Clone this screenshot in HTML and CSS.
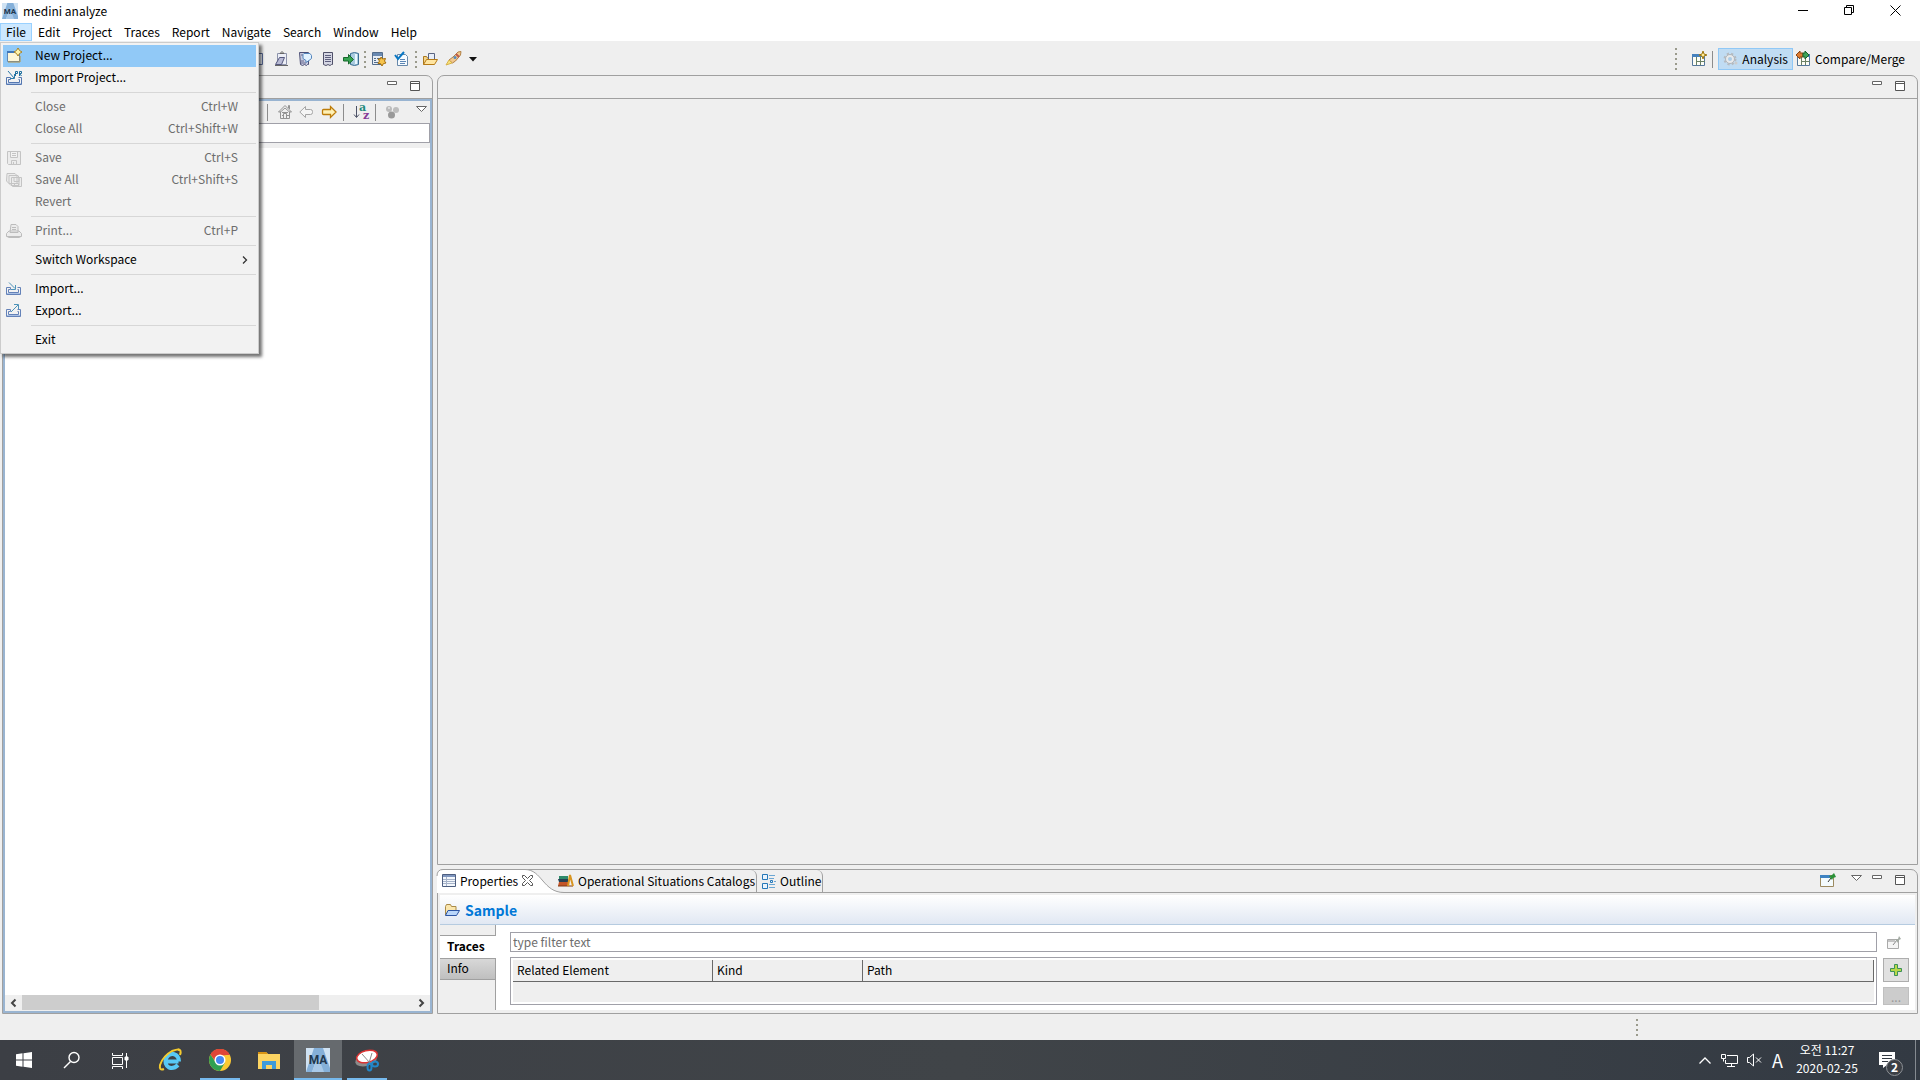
FILE: index.html
```html
<!DOCTYPE html>
<html lang="en">
<head>
    <meta charset="UTF-8">
    <meta name="viewport" content="width=device-width, initial-scale=1.0">
    <title>medini analyze</title>
    <link rel="stylesheet" href="styles.css">
</head>
<body>

<header class="titlebar">
    <svg class="app-icon" width="16" height="16" viewBox="0 0 24 24"><use href="#ma-logo"/></svg>
    <span class="app-title">medini analyze</span>
    <div class="window-buttons">
        <button aria-label="Minimize"><svg width="11" height="11"><path d="M0 5.5h10" stroke="#000"/></svg></button>
        <button aria-label="Restore"><svg width="11" height="11" fill="none" stroke="#000"><path d="M.5 2.500h7v7h-7zM2.500 2.500v-2h7v7h-2"/></svg></button>
        <button aria-label="Close"><svg width="11" height="11"><path d="M.5.5l10 10M10.500.5l-10 10" stroke="#000"/></svg></button>
    </div>
</header>

<nav class="menubar">
    <div class="menu-root">
        <button class="menu-title open">File</button>
        <div class="menu">
            <button class="item selected">
                <svg width="16" height="16"><path d="M1.500 3.500h12v10h-12z" fill="#fdf6d8" stroke="#5f86b5"/><path d="M1 3h9v2H1z" fill="#3f76b8"/><path d="M14 8v6H2" stroke="#b89443" fill="none"/><path d="M12 0l1.500 2.500L16 4l-2.500 1.500L12 8l-1.500-2.500L8 4l2.500-1.500z" fill="#fff3a8" stroke="#a98226"/></svg>
                <span>New Project...</span>
            </button>
            <button class="item">
                <svg width="16" height="16" fill="none"><path d="M4.500 7.500h-4v7h15v-7h-3M4.500 7.500v2h-2v3h11v-3h-1" stroke="#5577b0"/><path d="M1 13h14v1H1z" fill="#a9c0e4"/><path d="M2 1l6 7M8.500 4v4.500H4" stroke="#2a78a8"/><path d="M9.500 6V1.500h2v2h-2M13.500 6V1.500h2v2h-2l2 2.500" stroke="#1f6f9f"/></svg>
                <span>Import Project...</span>
            </button>
            <hr>
            <button class="item" disabled><span>Close</span><kbd>Ctrl+W</kbd></button>
            <button class="item" disabled><span>Close All</span><kbd>Ctrl+Shift+W</kbd></button>
            <hr>
            <button class="item" disabled>
                <svg width="16" height="16" fill="#ececec" stroke="#c4c4c4"><path d="M1.500 1.500h13v13h-12l-1-1zM4.500 1.500v6h7v-6M5.500 14.500v-4h5v4M7.500 12v2M6 3.500h4M6 5.500h4"/></svg>
                <span>Save</span><kbd>Ctrl+S</kbd>
            </button>
            <button class="item" disabled>
                <svg width="16" height="16" fill="#ececec" stroke="#c4c4c4"><path d="M1 1.500h8l2 2v8H3L.5 9zM3 3.500h9l1 2v8H5l-2-2zM5.500 5.500h10v9h-9l-1-1zM8 5.500v4h5v-4M8.500 14.500v-3h4v3"/></svg>
                <span>Save All</span><kbd>Ctrl+Shift+S</kbd>
            </button>
            <button class="item" disabled><span>Revert</span></button>
            <hr>
            <button class="item" disabled>
                <svg width="16" height="16" fill="#ececec" stroke="#bcbcbc"><path d="M3 8L.5 10.500v3h15v-3L13 8zM1 13.500l2 1h10l2-1M4 9.500l1-8h5l2 2v6zM6 4.500h4M6 6.500h4M4 9.500h8"/></svg>
                <span>Print...</span><kbd>Ctrl+P</kbd>
            </button>
            <hr>
            <button class="item submenu">
                <span>Switch Workspace</span>
                <svg class="more" width="6" height="10"><path d="M1 1.500L4.500 5 1 8.500" fill="none" stroke="#333" stroke-width="1.300"/></svg>
            </button>
            <hr>
            <button class="item">
                <svg width="16" height="16" fill="none"><path d="M4.500 6.500h-4v7h14v-7h-3M4.500 6.500v2h-2v3h10v-3h-1" stroke="#6482b8"/><path d="M1 12h13v1H1z" fill="#a9c0e4"/><path d="M3 1.500l6 6M9.500 4v4.500H5" stroke="#4d93b9"/></svg>
                <span>Import...</span>
            </button>
            <button class="item">
                <svg width="16" height="16" fill="none"><path d="M4.500 6.500h-4v7h14v-7h-3M4.500 6.500v2h-2v3h10v-3h-1" stroke="#6482b8"/><path d="M1 12h13v1H1z" fill="#a9c0e4"/><path d="M5 9l7-7M8 1.500h4.500V6" stroke="#4d93b9"/></svg>
                <span>Export...</span>
            </button>
            <hr>
            <button class="item"><span>Exit</span></button>
        </div>
    </div>
    <button class="menu-title">Edit</button>
    <button class="menu-title">Project</button>
    <button class="menu-title">Traces</button>
    <button class="menu-title">Report</button>
    <button class="menu-title">Navigate</button>
    <button class="menu-title">Search</button>
    <button class="menu-title">Window</button>
    <button class="menu-title">Help</button>
</nav>

<div class="toolbar">
    <div class="tools">
        <button class="tool" aria-label="Paste"><svg width="16" height="16"><path d="M2.500 2.500h9v11h-9z" fill="#e9eef8" stroke="#5b6c99"/></svg></button>
        <button class="tool" aria-label="Edit clipboard"><svg width="16" height="16"><path d="M3.500 2.500h9v11h-9z" fill="#eceef6" stroke="#8d93ab"/><path d="M6 2.500L8 .5l2 2z" fill="#ddd" stroke="#666"/><path d="M5.500 6.500h5l-3 7h-6z" fill="#b8bad4" stroke="#55587e"/><path d="M1 14.500h13" stroke="#666"/></svg></button>
        <button class="tool" aria-label="Review"><svg width="16" height="16"><path d="M2.500 1.500h9v12h-1l-1 1-2-1-2 1-2-1z" fill="#c8cbe0" stroke="#4c4f76"/><path d="M4 4h5M4 10h3M4 12h5" stroke="#66698e"/><path d="M7 2.500h6l1.500 2v3L12 9.500l-3 2v-2L6 7.500v-4z" fill="#e2f2ff" stroke="#5586bd"/></svg></button>
        <button class="tool" aria-label="Report"><svg width="16" height="16"><path d="M3.500 1.500h9v12h-1l-1.500 1-2-1-2 1-2.500-1z" fill="#d5d6e3" stroke="#4f5069"/><path d="M5 4.500h6M5 6.500h6M5 8.500h6M5 10.500h6" stroke="#5d5e7d"/></svg></button>
        <button class="tool" aria-label="Import data"><svg width="16" height="16"><path d="M7.500 2.500q4-2 8 0v11q-4 2-8 0z" fill="#a9cbe0" stroke="#3a6e93"/><path d="M13 3v10" stroke="#e9f7ff" stroke-width="2"/><path d="M.5 6.500h5v-3l5 5-5 4.500v-3h-5z" fill="#37a451" stroke="#17682c"/></svg></button>
        <i class="handle"></i>
        <button class="tool" aria-label="Form settings"><svg width="16" height="16"><path d="M1.500 1.500h10v12h-10z" fill="#e6edf5" stroke="#536c8b"/><path d="M2 2h9v3H2z" fill="#6989b1"/><path d="M3 7.500h2M6 7.500h3M3 9.500h2M3 11.500h4" stroke="#536c8b"/><path d="M10 6l1.500 2 3-.5L13.500 10l1.500 2-2.500.5L11 15l-1.500-2.500H7L8.500 10 7 8h2.500z" fill="#f6c44d" stroke="#a66e0b"/></svg></button>
        <button class="tool" aria-label="Validate"><svg width="16" height="16"><path d="M3.500 3.500h8l2 2v9h-10z" fill="#f6fbff" stroke="#6788aa"/><path d="M6 8.500h5M6 10.500h6M6 12.500h5" stroke="#5c86b5"/><path d="M1 4l3 4 6-7" fill="none" stroke="#0877c4" stroke-width="2"/></svg></button>
        <i class="handle"></i>
        <button class="tool" aria-label="Open"><svg width="16" height="16"><use href="#folder"/></svg></button>
        <button class="tool" aria-label="Launch"><svg width="17" height="16"><path d="M8 6l5-5 3-.5L15.500 4l-5 6-3 2L4 9z" fill="#f2c88d" stroke="#b28146"/><path d="M1 14l3-5 3 3z" fill="#f9e37c" stroke="#d7b24a"/><path d="M11 3l3 3" stroke="#bd5a4c" stroke-width="2"/><circle cx="10" cy="6.500" r="1.500" fill="#538abf"/></svg></button>
        <button class="tool drop" aria-label="Launch menu"><svg width="8" height="5"><path d="M0 0h8L4 4.500z" fill="#111"/></svg></button>
    </div>
    <div class="perspectives">
        <i class="handle tall"></i>
        <button class="tool" aria-label="Open Perspective"><svg width="16" height="16"><use href="#perspective"/><path d="M12 0l1 3 3 1-3 1-1 3-1-3-3-1 3-1z" fill="#ffeb91" stroke="#a27a15"/></svg></button>
        <i class="divider"></i>
        <button class="perspective active">
            <svg width="16" height="16"><circle cx="7" cy="8" r="5" fill="#d8dce0" stroke="#b5bbc1" stroke-width="3" stroke-dasharray="2 2"/><circle cx="7" cy="8" r="4.500" fill="#e8eaec" stroke="#aeb5bc"/><circle cx="7" cy="8" r="2" fill="#aacde8"/><circle cx="13" cy="12" r="1.500" fill="#ccc"/></svg>
            Analysis
        </button>
        <button class="perspective">
            <svg width="16" height="16"><use href="#perspective"/><path d="M0 4l4-4v2h3v4H4v2z" fill="#dc7a31" stroke="#8b4512"/><path d="M13 4L9 0v2H7v4h2v2z" fill="#3da357" stroke="#18622c"/></svg>
            Compare/Merge
        </button>
    </div>
</div>

<main class="workbench">
    <section class="view explorer">
        <div class="view-head">
            <div class="view-buttons">
                <button aria-label="Minimize view"><svg width="10" height="12"><use href="#minimize"/></svg></button>
                <button aria-label="Maximize view"><svg width="10" height="12"><use href="#maximize"/></svg></button>
            </div>
        </div>
        <div class="explorer-body">
            <div class="explorer-tools">
                <i class="divider"></i>
                <button class="tool" aria-label="Home"><svg width="16" height="16" fill="#eee" stroke="#939393"><path d="M3.500 7.500v7h9v-7M1.500 8L8 1.500 14.500 8h-2L8 4 3.500 8zM11.500 4V1.500h1V5M6.500 14.500v-5h3v5M5 8.500h6M5 11.500h1M10 11.500h2"/></svg></button>
                <button class="tool" aria-label="Back"><svg width="16" height="16"><path d="M.8 8L6.500 2.500v3h5q2 0 2 2v1q0 2-2 2h-5v3z" fill="#f5f5f5" stroke="#a5a5a5"/></svg></button>
                <button class="tool" aria-label="Forward"><svg width="16" height="16"><path d="M15 8L9.500 2.500v3h-7q-1 0-1 1v3q0 1 1 1h7v3z" fill="#fff1b5" stroke="#bd7c0a" stroke-width="1.300"/></svg></button>
                <i class="divider"></i>
                <button class="tool" aria-label="Sort"><svg width="18" height="18"><path d="M3.500 3v11M1 11.500l2.500 3 2.500-3" fill="none" stroke="#4d5266"/><text class="sort-a" x="6" y="8">a</text><text class="sort-z" x="10" y="16">z</text></svg></button>
                <i class="divider"></i>
                <button class="tool" aria-label="Filter"><svg width="16" height="16"><circle cx="4" cy="5" r="3" fill="#bbb"/><circle cx="11" cy="6" r="3" fill="#bdbdbd"/><circle cx="6.500" cy="11" r="3.500" fill="#999"/><circle cx="4" cy="4" r="1" fill="#e4e4e4"/></svg></button>
                <button class="view-menu" aria-label="View menu"><svg width="11" height="6"><use href="#triangle"/></svg></button>
            </div>
            <input class="path-field" type="text" aria-label="Path">
            <div class="tree"></div>
            <div class="scrollbar">
                <button aria-label="Scroll left"><svg width="7" height="8"><path d="M5.500.5L2 4l3.500 3.500" fill="none" stroke="#444" stroke-width="2"/></svg></button>
                <div class="track"><div class="thumb"></div></div>
                <button aria-label="Scroll right"><svg width="7" height="8"><path d="M1.500.5L5 4 1.500 7.500" fill="none" stroke="#444" stroke-width="2"/></svg></button>
            </div>
        </div>
    </section>

    <div class="right">
        <section class="view editor">
            <div class="view-head">
                <div class="view-buttons">
                    <button aria-label="Minimize editor"><svg width="10" height="12"><use href="#minimize"/></svg></button>
                    <button aria-label="Maximize editor"><svg width="10" height="12"><use href="#maximize"/></svg></button>
                </div>
            </div>
        </section>

        <section class="view properties">
            <div class="view-head">
                <div class="tabs">
                    <button class="tab current">
                        <svg class="tab-shape" width="128" height="24"><path d="M0 24V5Q1 .5 6 .5H88C105 .5 106 23.500 127 23.500V24z" fill="#fff"/><path d="M0 7Q0 .5 6 .5H88C105 .5 106 23.500 127 23.500" fill="none" stroke="#a0a0a0"/></svg>
                        <svg width="14" height="14"><path d="M.5.5h13v12H.5z" fill="#f3f7fc" stroke="#4d5e80"/><path d="M1 1h12v2H1z" fill="#7e95bd"/><path d="M4.500 3v9M1 5.500h12M1 7.500h12M1 9.500h12" stroke="#a6b3c9"/></svg>
                        <span>Properties</span>
                        <svg class="tab-close" width="11" height="11"><path d="M.5.5h2l3 3 3-3h2v2l-3 3 3 3v2h-2l-3-3-3 3h-2v-2l3-3-3-3z" fill="#fff" stroke="#555"/></svg>
                    </button>
                    <button class="tab catalogs">
                        <svg width="16" height="14"><path d="M1 2h9v3H1z" fill="#2d8a6a"/><path d="M0 5h10v3H1z" fill="#263f52"/><path d="M1 8h9v4H0z" fill="#c25427"/><path d="M0 12h15" stroke="#803813"/><path d="M10 12l2-11 3 11" fill="none" stroke="#d89520" stroke-width="2"/></svg>
                        <span>Operational Situations Catalogs</span>
                    </button>
                    <button class="tab">
                        <svg width="14" height="16" fill="#eaf4fd" stroke="#2678b8"><path d="M.5 1.500h5v5h-5zM.5 10.500h5v5h-5zM8.500 7.500h2v2h-2z"/><path d="M7 2.500h6M7 5.500h5M12 8.500h2M7 11.500h6M7 14.500h6" stroke="#6ba6d3"/></svg>
                        <span>Outline</span>
                    </button>
                </div>
                <div class="view-buttons">
                    <button class="pin" aria-label="Pin"><svg width="16" height="15"><path d="M.5 2.500h13v11H.5z" fill="#f4fbfd" stroke="#9c8a61"/><path d="M0 2h10v3H0z" fill="#3f83c2"/><path d="M8 9l3-4" stroke="#333"/><path d="M9 3l3 4 1-2 3-1-2-4-2 2z" fill="#2b9138"/></svg></button>
                    <button class="view-menu" aria-label="View menu"><svg width="11" height="6"><use href="#triangle"/></svg></button>
                    <button aria-label="Minimize view"><svg width="10" height="12"><use href="#minimize"/></svg></button>
                    <button aria-label="Maximize view"><svg width="10" height="12"><use href="#maximize"/></svg></button>
                </div>
            </div>
            <div class="properties-body">
                <h2 class="section-title">
                    <svg width="16" height="14"><path d="M1.500 12V3.500l1-2h4l1 2h4.500V7" fill="#fae6ae" stroke="#a98a48"/><path d="M1.500 12.500L4 7.500h11.500l-3 5z" fill="#b9d6fa" stroke="#2d55a3"/></svg>
                    Sample
                </h2>
                <div class="section-content">
                    <div class="side-tabs">
                        <button class="side-tab current">Traces</button>
                        <button class="side-tab">Info</button>
                    </div>
                    <div class="traces">
                        <input class="filter" type="text" placeholder="type filter text" aria-label="Filter">
                        <div class="table-frame">
                            <table>
                                <thead>
                                    <tr>
                                        <th class="col-element">Related Element</th>
                                        <th class="col-kind">Kind</th>
                                        <th>Path</th>
                                    </tr>
                                </thead>
                            </table>
                        </div>
                    </div>
                    <div class="actions">
                        <button class="link" aria-label="Link"><svg width="16" height="14"><path d="M.5 3.500h11v9H.5z" fill="#f5f5f5" stroke="#aaa"/><path d="M1 4h7v2H1z" fill="#c4c4c4"/><path d="M6 9l4-5" stroke="#888"/><path d="M8 3l3 4 1-3 2-1-2-3-1 3z" fill="#a3aaa3"/></svg></button>
                        <button class="action" aria-label="Add"><svg width="12" height="12"><path d="M4.500.5h3v4h4v3h-4v4h-3v-4h-4v-3h4z" fill="#b8d84a" stroke="#3c9159"/></svg></button>
                        <button class="action more-button" aria-label="More" disabled>...</button>
                    </div>
                </div>
            </div>
        </section>
    </div>
</main>

<div class="statusbar"><i class="handle"></i></div>

<footer class="taskbar">
    <div class="system">
        <button class="task" aria-label="Start"><svg width="16" height="16" fill="#fff"><path d="M0 2.300L6.500 1.300V7.500H0zM7.500 1.200L16 0v7.500H7.500zM0 8.500h6.500v6.200L0 13.700zM7.500 8.500H16V16l-8.500-1.200z"/></svg></button>
        <button class="task" aria-label="Search"><svg width="18" height="18" fill="none" stroke="#fff" stroke-width="1.400"><circle cx="11" cy="6.500" r="5"/><path d="M7.500 10.500L1 17"/></svg></button>
        <button class="task" aria-label="Task View"><svg width="17" height="17" fill="none" stroke="#fff"><path d="M.5 1v2.500h10V1M.5 5.500h10v7H.5zM.5 17v-2.500h10V17M14.500 1v15"/><path d="M13 5h3v3h-3z" fill="#fff"/></svg></button>
    </div>
    <button class="task" aria-label="Internet Explorer"><svg width="24" height="24" fill="none"><path d="M19.500 13.500H7.500M19 17Q15 21 10 19.500 5 16.500 7 10.500 9.500 5.500 14.500 6 20 7.500 20 13.500" stroke="#58c9f5" stroke-width="4"/><path d="M19.500 2.500Q22 0 13 3 4 8 1 17q-1 6 4 4M19 2q4-1 2 5" stroke="#f5cb2e" stroke-width="2"/></svg></button>
    <button class="task running" aria-label="Chrome"><svg width="22" height="22"><circle cx="11" cy="11" r="11" fill="#fcc934"/><path d="M1.500 5.500A11 11 0 0 1 20.500 5.500L11 7z" fill="#df4638"/><path d="M1.500 5.500A11 11 0 0 0 11 22l5-8.500L6.500 13z" fill="#30a052"/><path d="M11 6h9.700a11 11 0 0 0-19.200-.5l5 7z" fill="#df4638"/><circle cx="11" cy="11" r="5.500" fill="#fff"/><circle cx="11" cy="11" r="4" fill="#4788f4"/></svg></button>
    <button class="task" aria-label="File Explorer"><svg width="22" height="19"><path d="M0 1h8l2 2h12v15H0z" fill="#fcd462"/><path d="M0 1h8l2 2H0z" fill="#d99413"/><path d="M4 18v-8h14v8h-4v-4H8v4z" fill="#3e9bda"/></svg></button>
    <button class="task running focused" aria-label="medini analyze"><svg width="24" height="24" viewBox="0 0 24 24"><use href="#ma-logo"/></svg></button>
    <button class="task running" aria-label="Snipping Tool"><svg width="26" height="24"><ellipse cx="12" cy="12" rx="11" ry="6" fill="#8b8b8b" transform="rotate(-14 12 12)"/><ellipse cx="13" cy="8.500" rx="10.500" ry="6" fill="#fff" stroke="#dc3434" stroke-width="1.500" transform="rotate(-14 13 8.500)"/><path d="M8 6l8 9M18 5l-3 10" stroke="#888"/><g fill="none" stroke="#2286c8" stroke-width="2"><ellipse cx="15.500" cy="19" rx="2" ry="3.500"/><ellipse cx="21" cy="16" rx="3" ry="2.500"/></g></svg></button>
    <div class="tray">
        <svg width="14" height="9"><path d="M1.500 7.500L7 2l5.500 5.500" fill="none" stroke="#fff" stroke-width="1.300"/></svg>
        <svg width="17" height="15" fill="none" stroke="#fff"><path d="M6 2.500h10.500v8H4.500V7M.5 1.500h4v4h-4zM2.500 5.500v3M10.500 10.500v3M6 13.500h8"/></svg>
        <svg width="16" height="14" fill="none" stroke="#fff"><path d="M.5 4.500h2l4-3.500v12l-4-3.500h-2zM9 4.500l5 5M14 4.500l-5 5"/></svg>
        <span class="ime">A</span>
        <time class="clock" datetime="2020-02-25T11:27"><span>오전 11:27</span><span>2020-02-25</span></time>
        <button class="notifications" aria-label="Notifications">
            <svg width="16" height="16"><path d="M0 0h16v13h-8l-4 3v-3H0z" fill="#fff"/><path d="M3 3.500h10M3 6.500h10M3 9.500h6" stroke="#333a43"/></svg>
            <span class="badge">2</span>
        </button>
    </div>
</footer>

<!-- shared icons -->
<svg class="defs" width="0" height="0">
    <symbol id="ma-logo" viewBox="0 0 24 24"><path d="M0 0h24v24H0z" fill="#cfe2f3"/><path d="M8 0h9l7 20v4h-7L12 8 6 24H0z" fill="#85b0d9"/><path d="M12 8l6 16H6z" fill="#a9c9e8"/><text class="logo-text" x="12" y="16">MA</text></symbol>
    <symbol id="folder" viewBox="0 0 16 16"><path d="M1.500 13.500v-8h3l1 1.500h7v6" fill="#f5d48a" stroke="#a9781d"/><path d="M6.500 2.500h6v6h-6z" fill="#e8eef8" stroke="#5a6582"/><path d="M1.500 13.500l3-5h11l-3 5z" fill="#ffe5a1" stroke="#b57a17"/></symbol>
    <symbol id="perspective" viewBox="0 0 16 16"><path d="M1.500 3.500h12v11h-12z" fill="#fdfdf6" stroke="#55779b"/><path d="M1 3h13v3H1z" fill="#4681bd"/><path d="M5.500 6v8M9.500 6v8M5 10.500h9" stroke="#6b8165"/></symbol>
    <symbol id="minimize" viewBox="0 0 10 12"><path d="M.5 2.500h9v3h-9z" fill="#fff" stroke="#666"/></symbol>
    <symbol id="maximize" viewBox="0 0 10 12"><path d="M.5 2.500h9v9h-9zM.5 4.500h9" fill="#fff" stroke="#555"/></symbol>
    <symbol id="triangle" viewBox="0 0 11 6"><path d="M.5.5h10l-5 5z" fill="#fff" stroke="#666"/></symbol>
</svg>

</body>
</html>
```

FILE: styles.css
```css
* {
    box-sizing: border-box;
}
body {
    margin: 0;
    height: 100vh;
    display: flex;
    flex-direction: column;
    background-color: #efefef;
    color: #000;
    font-family: "Noto Sans CJK KR", "Open Sans", sans-serif;
    font-size: 12px;
    line-height: 18px;
    overflow: hidden;
}
button, input {
    font: inherit;
    color: inherit;
    margin: 0;
    padding: 0;
    border: 0;
    border-radius: 0;
    background: none;
}
button {
    white-space: nowrap;
}
svg {
    display: block;
    flex: none;
    overflow: visible;
}
.defs {
    position: absolute;
}
.logo-text {
    font: bold 12px "Roboto", sans-serif;
    fill: #22384f;
    text-anchor: middle;
}

/* title bar */
.titlebar {
    display: flex;
    align-items: center;
    height: 23px;
    padding: 0 2px 2px;
    background-color: #fff;
}
.app-title {
    margin-left: 5px;
}
.window-buttons {
    display: flex;
    margin-left: auto;
    height: 20px;
}
.window-buttons button {
    display: grid;
    place-items: center;
    width: 46px;
}

/* menu bar */
.menubar {
    display: flex;
    height: 18px;
    background-color: #fff;
}
.menu-root {
    position: relative;
    z-index: 10;
}
.menu-title {
    height: 18px;
    padding: 0 6px;
    line-height: 18px;
}
.menu-title.open {
    background-color: #cce8ff;
    box-shadow: inset 0 0 0 1px #99d1ff;
}
.menu {
    position: absolute;
    top: 19px;
    left: 0;
    width: 259px;
    padding: 2px;
    border: 1px solid #ccc;
    background-color: #f2f2f2;
    box-shadow: 3px 3px 3px rgba(0, 0, 0, 0.55);
}
.item {
    display: grid;
    grid-template-columns: 32px 1fr auto;
    align-items: center;
    width: 100%;
    height: 22px;
    padding: 0 18px 2px 0;
    text-align: left;
}
.item svg {
    margin: 2px 0 0 3px;
}
.item span {
    grid-column: 2;
}
.item kbd {
    font: inherit;
}
.item:disabled {
    color: #6d6d6d;
}
.item.selected {
    background-color: #91c9f7;
}
.item.submenu {
    padding-right: 8px;
}
.menu hr {
    height: 1px;
    margin: 3px 0 3px 28px;
    border: 0;
    background-color: #d7d7d7;
}

/* main toolbar */
.toolbar {
    display: flex;
    justify-content: space-between;
    align-items: center;
    height: 34px;
    padding: 2px 15px 0 251px;
}
.tools, .perspectives {
    display: flex;
    align-items: center;
}
.tool {
    display: grid;
    place-items: center start;
    width: 23px;
    height: 22px;
}
.handle {
    width: 2px;
    height: 17px;
    margin: 0 5px 0 -2px;
    background: repeating-linear-gradient(#9a9a8c 0 2px, transparent 2px 5px);
}
.tool.drop {
    place-items: center;
    width: 9px;
}
.handle.tall {
    height: 22px;
    margin-right: 14px;
}
.divider {
    width: 1px;
    height: 17px;
    background-color: #8c8c8c;
}
.perspectives .tool {
    width: 21px;
}
.perspective {
    display: flex;
    align-items: center;
    height: 22px;
    gap: 3px;
}
.perspective.active {
    margin: 0 3px 0 5px;
    padding: 0 4px;
    border: 1px solid #90c8f6;
    background-color: #c0dcf3;
}

/* views */
.workbench {
    flex: 1;
    display: grid;
    grid-template-columns: 431px 1fr;
    gap: 4px;
    min-height: 0;
    padding: 0 2px;
}
.right {
    display: flex;
    flex-direction: column;
    gap: 4px;
    min-width: 0;
}
.view {
    display: flex;
    flex-direction: column;
    border: 1px solid #a0a0a0;
    border-radius: 7px 7px 0 0;
}
.view-head {
    display: flex;
    height: 23px;
    border-bottom: 1px solid #a0a0a0;
}
.view-buttons {
    display: flex;
    gap: 13px;
    margin: 3px 12px 0 auto;
    height: 12px;
}
.view-buttons button {
    display: flex;
    align-items: flex-start;
    height: 12px;
}
.view-buttons .view-menu {
    margin: 2px -3px 0 0;
}
.view-buttons .pin {
    margin-right: 2px;
}
.editor {
    flex: 1;
}

/* explorer */
.explorer-body {
    flex: 1;
    display: flex;
    flex-direction: column;
    border: 2px solid #99b4d1;
    background-color: #efefef;
}
.explorer-tools {
    display: flex;
    align-items: center;
    height: 22px;
    padding: 0 3px 0 262px;
}
.explorer-tools .divider {
    margin-right: 9px;
}
.explorer-tools .tool {
    width: 22px;
}
.explorer-tools .view-menu {
    align-self: start;
    margin: 5px 0 0 auto;
}
.sort-a {
    font: bold 11px "DejaVu Serif", serif;
    fill: #1e8a7c;
}
.sort-z {
    font: bold 11px "DejaVu Serif", serif;
    fill: #863b98;
}
.path-field {
    height: 20px;
    border: 1px solid #a0a0a8;
    background-color: #fff;
}
.tree {
    flex: 1;
    margin-top: 5px;
    background-color: #fff;
}
.scrollbar {
    display: flex;
    height: 16px;
}
.scrollbar button {
    display: grid;
    place-items: center;
    width: 17px;
}
.track {
    flex: 1;
}
.thumb {
    width: 76%;
    height: 15px;
    background-color: #cdcdcd;
}

/* properties */
.properties {
    height: 145px;
}
.tabs {
    display: flex;
    margin-bottom: -1px;
}
.tab {
    display: flex;
    align-items: center;
    gap: 4px;
    padding: 0 1px 2px 5px;
    border-right: 1px solid #a0a0a0;
    border-radius: 0 6px 0 0;
}
.tab.current {
    position: relative;
    width: 115px;
    padding-left: 4px;
    border: 0;
}
.tab > * {
    position: relative;
}
.tab > .tab-shape {
    position: absolute;
    top: -1px;
    left: -1px;
}
.properties-body {
    flex: 1;
    display: flex;
    flex-direction: column;
    margin: 2px 2px 3px;
    background-color: #fff;
}
.section-title {
    display: flex;
    align-items: center;
    gap: 5px;
    height: 30px;
    margin: 0;
    padding-left: 4px;
    border-bottom: 1px solid #b5cbe0;
    background: linear-gradient(#fff, #e1e8f3);
    color: #0078d7;
    font-size: 14px;
    font-weight: bold;
}
.section-content {
    flex: 1;
    display: flex;
}
.side-tabs {
    display: flex;
    flex-direction: column;
    width: 56px;
    padding-top: 10px;
    background: linear-gradient(#a0a0a0, #a0a0a0) right / 1px 100% no-repeat #efefef;
}
.side-tab {
    height: 22px;
    padding: 0 0 3px 7px;
    border: 1px solid #a0a0a0;
    border-left: 0;
    background: linear-gradient(#d8d8d8, #bfbfbf);
    text-align: left;
}
.side-tab.current {
    height: 23px;
    border-width: 1px 0 0;
    background: #fff;
    font-weight: bold;
}
.traces {
    flex: 1;
    display: flex;
    flex-direction: column;
    gap: 5px;
    padding: 7px 6px 5px 14px;
}
.filter {
    height: 20px;
    padding: 0 2px 2px;
    border: 1px solid #a0a0a8;
}
.filter::placeholder {
    color: #6d6d6d;
}
.table-frame {
    flex: 1;
    padding: 2px;
    border: 1px solid #a0a0a8;
    background: #efefef content-box;
}
table {
    width: 100%;
    border-collapse: separate;
    border-spacing: 0;
    table-layout: fixed;
}
th {
    height: 22px;
    padding: 0 4px 2px;
    border-right: 1px solid #696969;
    border-bottom: 1px solid #696969;
    font-weight: normal;
    text-align: left;
}
.col-element {
    width: 200px;
}
.col-kind {
    width: 150px;
}
.actions {
    display: flex;
    flex-direction: column;
    align-items: center;
    gap: 5px;
    width: 26px;
    margin: 8px 6px 5px 0;
}
.link {
    width: 18px;
    height: 20px;
}
.action {
    display: grid;
    place-items: center;
    width: 26px;
    height: 24px;
    border: 1px solid #adadad;
    background-color: #e1e1e1;
}
.more-button {
    height: 18px;
    border-color: #bfbfbf;
    background-color: #ccc;
    color: #999;
}

/* status bar and taskbar */
.statusbar {
    display: flex;
    justify-content: flex-end;
    align-items: center;
    height: 26px;
    padding-right: 277px;
}
.taskbar {
    display: flex;
    gap: 1px;
    height: 40px;
    background: linear-gradient(90deg, #3c3f45, #404448 50%, #333a43);
    color: #fff;
}
.system {
    display: flex;
    padding-right: 2px;
}
.task {
    position: relative;
    display: grid;
    place-items: center;
    width: 48px;
}
.task.running::after {
    content: "";
    position: absolute;
    bottom: 0;
    left: 4px;
    right: 4px;
    height: 2px;
    background-color: #76b9ed;
}
.task.focused {
    background-color: #666a6e;
}
.task.focused::after {
    left: 0;
    right: 0;
}
.tray {
    display: flex;
    align-items: center;
    gap: 9px;
    margin-left: auto;
    padding-right: 4px;
}
.ime {
    font-size: 18px;
}
.clock {
    display: flex;
    flex-direction: column;
    align-items: center;
    width: 70px;
    padding-bottom: 2px;
}
.notifications {
    position: relative;
    width: 45px;
    padding-left: 8px;
    height: 40px;
    border-right: 1px solid #858a90;
}
.badge {
    position: absolute;
    left: 15px;
    bottom: 4px;
    width: 17px;
    height: 17px;
    border: 1px solid #8d9196;
    border-radius: 50%;
    background-color: #3b3f45;
    font-size: 12px;
    font-weight: bold;
    line-height: 14px;
}
```
